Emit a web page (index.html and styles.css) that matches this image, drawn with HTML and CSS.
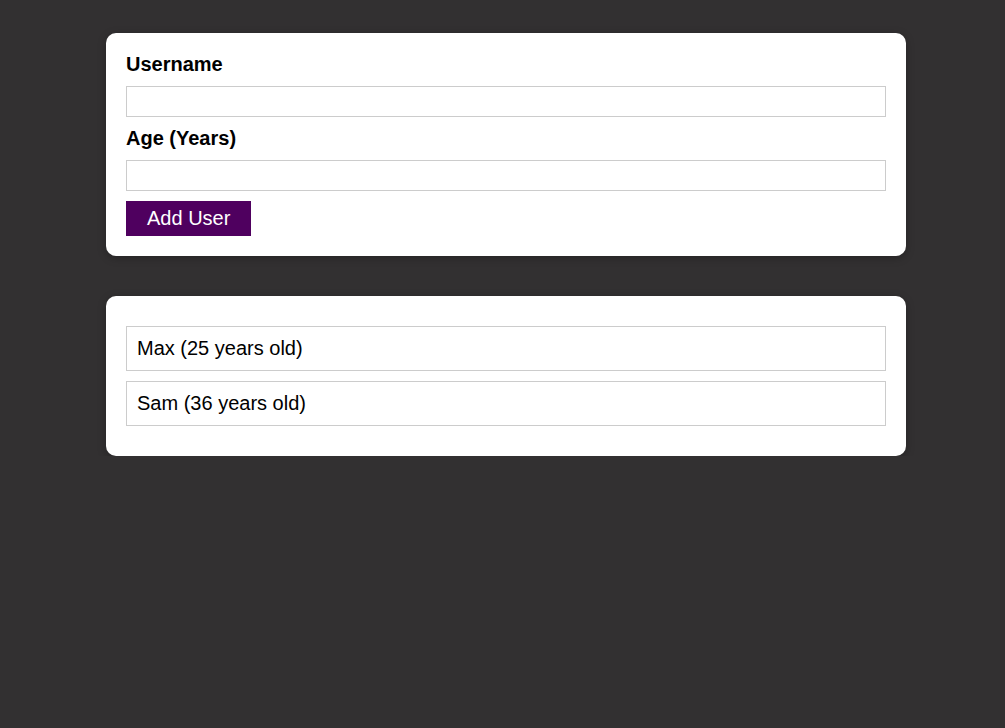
FILE: index.html
```html
<!DOCTYPE html>
<html lang="en">
<head>
<meta charset="utf-8">
<title>Users</title>
<link rel="stylesheet" href="styles.css">
</head>
<body>
<div class="root">
  <div class="card form-card">
    <form class="form">
      <label class="label" for="username">Username</label>
      <input class="field" id="username" type="text">
      <label class="label" for="age">Age (Years)</label>
      <input class="field" id="age" type="number">
      <button class="button" type="submit">Add User</button>
    </form>
  </div>
  <div class="card users-card">
    <ul class="users">
      <li class="user">Max (25 years old)</li>
      <li class="user">Sam (36 years old)</li>
    </ul>
  </div>
</div>
</body>
</html>
```
FILE: styles.css
```css
* { box-sizing: border-box; }
html {
  font-family: "Liberation Sans", Arial, sans-serif;
  font-size: 20px;
}
body {
  margin: 0;
  background: #323031;
  color: #000;
}
.root {
  display: flex;
  flex-direction: column;
  align-items: center;
  gap: 40px;
  padding-top: 33px;
  padding-left: 7px;
}
.card {
  background: #fff;
  border-radius: 10px;
  box-shadow: 0 2px 8px rgba(0, 0, 0, 0.26);
  width: 800px;
  padding: 20px;
}
.form {
  display: flex;
  flex-direction: column;
  align-items: flex-start;
}
.label {
  font-weight: bold;
  line-height: 23px;
  margin-bottom: 10px;
}
.field {
  font: inherit;
  line-height: 23px;
  width: 100%;
  border: 1px solid #ccc;
  padding: 3px;
  margin: 0 0 10px 0;
  -moz-appearance: textfield;
}
.field::-webkit-outer-spin-button,
.field::-webkit-inner-spin-button { -webkit-appearance: none; margin: 0; }
.button {
  font: inherit;
  line-height: 23px;
  border: 1px solid #4f005f;
  background: #4f005f;
  color: #fff;
  padding: 5px 20px;
  cursor: pointer;
}
.users {
  list-style: none;
  margin: 0;
  padding: 0;
}
.user {
  border: 1px solid #ccc;
  margin: 10px 0;
  padding: 10px;
  line-height: 23px;
}
```
